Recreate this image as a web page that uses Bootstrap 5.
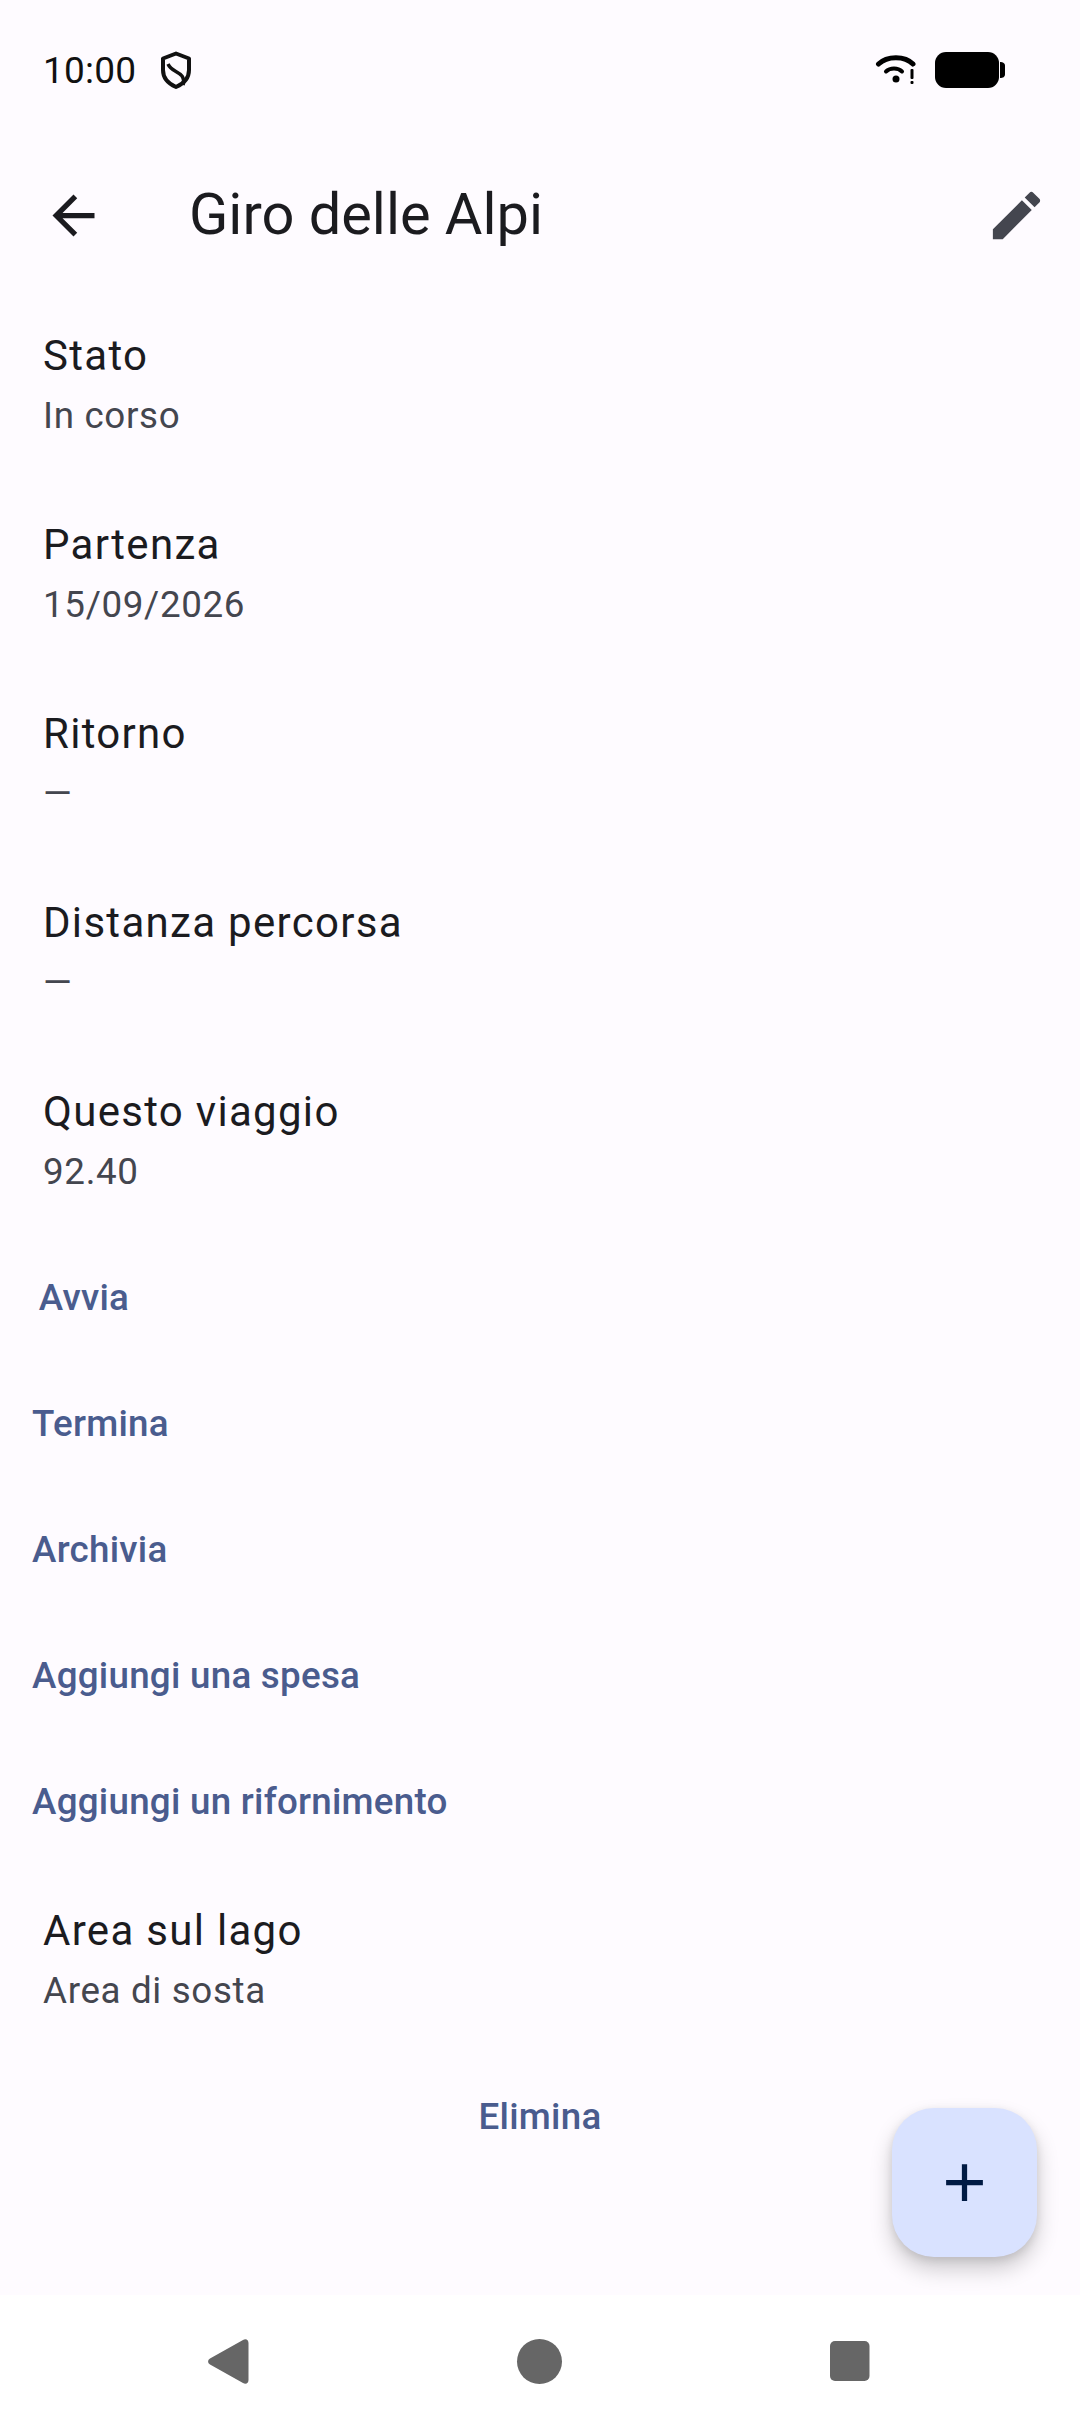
<!doctype html>
<html lang="it">
<head>
<meta charset="utf-8">
<link href="https://cdn.jsdelivr.net/npm/bootstrap@5.3.0/dist/css/bootstrap.min.css" rel="stylesheet">
<style>
html,body{height:100%;margin:0}
body{width:1080px;height:2424px;overflow:hidden;background:#fefbff;font-family:Roboto,"Liberation Sans",sans-serif;color:#1b1b1f}
.phone-screen{width:1080px;height:2424px;position:relative}
.status-strip{height:122px;padding:18px 0 0 43px}
.status-time{font-size:37px;line-height:1;color:#111;letter-spacing:.2px}
.status-shield{width:36px;height:38px;margin-left:22px}
.status-wifi{width:44px;height:36px;margin-right:15px}
.status-battery{width:72px;height:36px;margin-right:74px}
.app-strip{height:168px;padding-top:18px}
.app-icon{width:63px;height:63px;flex:none}
.app-back{margin-left:42px;fill:#1b1b1f}
.app-edit{margin-right:32px;fill:#44464f}
.app-title{font-size:57.75px;line-height:1;margin:0 0 0 84px;font-weight:400;color:#1b1b1f}
.info-list{background:transparent;border-radius:0}
.info-item{height:189px;padding:0 43px;background:transparent;border:0;color:inherit}
.info-label{font-size:42px;line-height:60px;letter-spacing:1.3px;color:#1b1b1f}
.info-value{font-size:36.75px;line-height:55px;margin-top:2px;letter-spacing:.66px;color:#44464f}
.action-row{height:126px}
.action-btn{min-width:168px;height:126px;padding:0 32px;border:0;border-radius:0;background:transparent;font-family:inherit;font-size:36.75px;font-weight:500;line-height:1;letter-spacing:.26px;color:#4a5c8e;text-decoration:none}
.fab-add{position:absolute;left:892px;top:2108px;width:145px;height:149px;border:0;border-radius:42px;background:#d9e2ff;box-shadow:0 12px 22px rgba(0,0,0,.2),0 3px 8px rgba(0,0,0,.1)}
.fab-add svg{width:63px;height:63px;fill:#001a43}
.nav-strip{position:absolute;left:0;right:0;top:2295px;height:129px;background:#fff}
.nav-icon{position:absolute;top:0;left:0;width:1080px;height:129px;fill:#666}
</style>
</head>
<body>
<div class="phone-screen">
  <div class="status-strip d-flex align-items-center">
    <span class="status-time">10:00</span>
    <svg class="status-shield" viewBox="0 0 36 38"><path d="M18 2.500 L31 7.500 V19 C31 27 26 32.500 18 36 C10 32.500 5 27 5 19 V7.500 Z" fill="none" stroke="#111" stroke-width="4" stroke-linejoin="round"/><path d="M10 13 C13 20 20 20 24 25 C26 28 26 31 25 34" fill="none" stroke="#111" stroke-width="3.500"/></svg>
    <div class="flex-grow-1"></div>
    <svg class="status-wifi" viewBox="0 0 44 36"><path d="M3.500 12 C12 3.500 30 3.500 38 12" fill="none" stroke="#000" stroke-width="5" stroke-linecap="round"/><path d="M11 19.500 C15 15.500 23 15.500 27 19.500" fill="none" stroke="#000" stroke-width="4" stroke-linecap="round"/><circle cx="21" cy="27" r="3.500"/><rect x="35.500" y="17" width="3" height="10" rx="1"/><rect x="35.500" y="29" width="3" height="3" rx="1"/></svg>
    <svg class="status-battery" viewBox="0 0 72 36"><rect x="1" y="0" width="64" height="36" rx="11"/><path d="M66 10 C69 10 71 11 71 14 V22 C71 25 69 26 66 26 Z"/></svg>
  </div>
  <header class="app-strip d-flex align-items-center">
    <svg class="app-icon app-back" viewBox="0 0 24 24"><path d="M20 11H7.830l5.590-5.590L12 4l-8 8 8 8 1.410-1.410L7.830 13H20v-2z"/></svg>
    <h1 class="app-title flex-grow-1">Giro delle Alpi</h1>
    <svg class="app-icon app-edit" viewBox="0 0 24 24"><path d="M3 17.250V21h3.750L17.810 9.940l-3.750-3.750L3 17.250zM20.710 7.040c.39-.39.39-1.020 0-1.410l-2.340-2.340c-.39-.39-1.020-.39-1.410 0l-1.830 1.830 3.750 3.750 1.830-1.830z"/></svg>
  </header>
  <main>
    <div class="list-group list-group-flush info-list">
      <div class="list-group-item info-item d-flex flex-column justify-content-center"><div class="info-label">Stato</div><div class="info-value">In corso</div></div>
      <div class="list-group-item info-item d-flex flex-column justify-content-center"><div class="info-label">Partenza</div><div class="info-value">15/09/2026</div></div>
      <div class="list-group-item info-item d-flex flex-column justify-content-center"><div class="info-label">Ritorno</div><div class="info-value">—</div></div>
      <div class="list-group-item info-item d-flex flex-column justify-content-center"><div class="info-label">Distanza percorsa</div><div class="info-value">—</div></div>
      <div class="list-group-item info-item d-flex flex-column justify-content-center"><div class="info-label">Questo viaggio</div><div class="info-value">92.40</div></div>
    </div>
    <div class="action-row d-flex"><button class="btn action-btn" type="button">Avvia</button></div>
    <div class="action-row d-flex"><button class="btn action-btn" type="button">Termina</button></div>
    <div class="action-row d-flex"><button class="btn action-btn" type="button">Archivia</button></div>
    <div class="action-row d-flex"><button class="btn action-btn" type="button">Aggiungi una spesa</button></div>
    <div class="action-row d-flex"><button class="btn action-btn" type="button">Aggiungi un rifornimento</button></div>
    <div class="list-group list-group-flush info-list">
      <div class="list-group-item info-item d-flex flex-column justify-content-center"><div class="info-label">Area sul lago</div><div class="info-value">Area di sosta</div></div>
    </div>
    <div class="action-row d-flex justify-content-center"><button class="btn action-btn" type="button">Elimina</button></div>
  </main>
  <button class="fab-add d-flex align-items-center justify-content-center" type="button" aria-label="Aggiungi"><svg viewBox="0 0 24 24"><path d="M19 13h-6v6h-2v-6H5v-2h6V5h2v6h6v2z"/></svg></button>
  <nav class="nav-strip">
    <svg class="nav-icon" viewBox="0 0 1080 129"><path d="M243 45 C246 43 248.500 45 248.500 48 V85 C248.500 88 246 90 243 88 L210 69.500 C207.500 68 207.500 65 210 63.500 Z"/><ellipse cx="539.500" cy="66.500" rx="22.500" ry="22.500"/><rect x="830" y="46" width="39.500" height="40" rx="5"/></svg>
  </nav>
</div>
<script src="https://cdn.jsdelivr.net/npm/bootstrap@5.3.0/dist/js/bootstrap.bundle.min.js"></script>
</body>
</html>
